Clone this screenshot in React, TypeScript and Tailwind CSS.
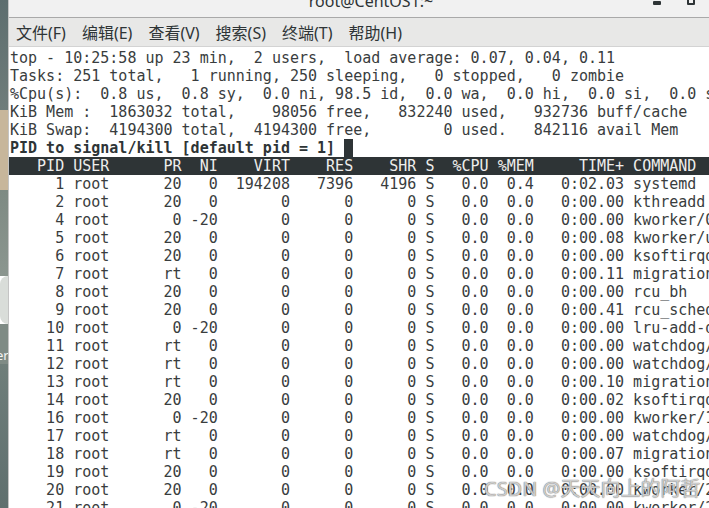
import React from 'react';

const mono = 'font-["DejaVu_Sans_Mono","Liberation_Mono",monospace]';

type Proc = [number, string, string, string, string, string, string, string, string, string, string, string];

const procs: Proc[] = [
  [1, 'root', '20', '0', '194208', '7396', '4196', 'S', '0.0', '0.4', '0:02.03', 'systemd'],
  [2, 'root', '20', '0', '0', '0', '0', 'S', '0.0', '0.0', '0:00.00', 'kthreadd'],
  [4, 'root', '0', '-20', '0', '0', '0', 'S', '0.0', '0.0', '0:00.00', 'kworker/0:0H'],
  [5, 'root', '20', '0', '0', '0', '0', 'S', '0.0', '0.0', '0:00.08', 'kworker/u256:0'],
  [6, 'root', '20', '0', '0', '0', '0', 'S', '0.0', '0.0', '0:00.00', 'ksoftirqd/0'],
  [7, 'root', 'rt', '0', '0', '0', '0', 'S', '0.0', '0.0', '0:00.11', 'migration/0'],
  [8, 'root', '20', '0', '0', '0', '0', 'S', '0.0', '0.0', '0:00.00', 'rcu_bh'],
  [9, 'root', '20', '0', '0', '0', '0', 'S', '0.0', '0.0', '0:00.41', 'rcu_sched'],
  [10, 'root', '0', '-20', '0', '0', '0', 'S', '0.0', '0.0', '0:00.00', 'lru-add-drain'],
  [11, 'root', 'rt', '0', '0', '0', '0', 'S', '0.0', '0.0', '0:00.00', 'watchdog/0'],
  [12, 'root', 'rt', '0', '0', '0', '0', 'S', '0.0', '0.0', '0:00.00', 'watchdog/1'],
  [13, 'root', 'rt', '0', '0', '0', '0', 'S', '0.0', '0.0', '0:00.10', 'migration/1'],
  [14, 'root', '20', '0', '0', '0', '0', 'S', '0.0', '0.0', '0:00.02', 'ksoftirqd/1'],
  [16, 'root', '0', '-20', '0', '0', '0', 'S', '0.0', '0.0', '0:00.00', 'kworker/1:0H'],
  [17, 'root', 'rt', '0', '0', '0', '0', 'S', '0.0', '0.0', '0:00.00', 'watchdog/2'],
  [18, 'root', 'rt', '0', '0', '0', '0', 'S', '0.0', '0.0', '0:00.07', 'migration/2'],
  [19, 'root', '20', '0', '0', '0', '0', 'S', '0.0', '0.0', '0:00.00', 'ksoftirqd/2'],
  [20, 'root', '20', '0', '0', '0', '0', 'S', '0.0', '0.0', '0:00.00', 'kworker/2:0'],
  [21, 'root', '0', '-20', '0', '0', '0', 'S', '0.0', '0.0', '0:00.00', 'kworker/2:0H'],
];

// same column widths top uses here
const fmt = (p: Proc) =>
  String(p[0]).padStart(6) + ' ' +
  p[1].padEnd(8) + ' ' +
  p[2].padStart(3) + ' ' +
  p[3].padStart(3) + ' ' +
  p[4].padStart(7) + ' ' +
  p[5].padStart(6) + ' ' +
  p[6].padStart(6) + ' ' +
  p[7] + ' ' +
  p[8].padStart(5) + ' ' +
  p[9].padStart(4) + ' ' +
  p[10].padStart(9) + ' ' +
  p[11];

const header = '   PID USER      PR  NI    VIRT    RES    SHR S  %CPU %MEM     TIME+ COMMAND';

const menus = ['文件(F)', '编辑(E)', '查看(V)', '搜索(S)', '终端(T)', '帮助(H)'];

const App: React.FC = () => {
  return (
    <div className="relative flex h-[508px] w-[709px] overflow-hidden bg-white">
      {/* desktop behind the window */}
      <div className="flex w-2 shrink-0 flex-col">
        <div className="h-[110px] bg-gradient-to-b from-[#5d6d6e] to-[#6f7d7b]" />
        <div className="h-[80px] bg-[#c7b69b]" />
        <div className="h-[86px] bg-gradient-to-b from-[#7e8a83] to-[#8b968f]" />
        <div className="h-[48px] rounded-l-full bg-[#d9ddd9]" />
        <div className="flex h-[40px] items-end bg-[#7f8b85]">
          <span className="-ml-[4px] pb-[2px] font-['Noto_Sans',sans-serif] text-[13px] leading-none text-[#f4f4f4]">er</span>
        </div>
        <div className="flex-1 bg-gradient-to-b from-[#6f7e7a] to-[#5f6f6e]" />
      </div>

      <div className="flex min-w-0 flex-1 flex-col border-l border-[#c4c4c4]">
        {/* title bar, cut at the top */}
        <div className="flex h-[18px] shrink-0 items-start overflow-hidden border-b border-[#a9a9a9] bg-[#f1f1f1]">
          <div className="flex flex-1 justify-center pl-[80px]">
            <span className="-mt-[10px] font-['Noto_Sans',sans-serif] text-[16px] leading-[22px] text-[#2e3436]">root@CentOS1:~</span>
          </div>
          <div className="flex items-start gap-[26px] pr-[14px]">
            <div className="mt-[1px] h-[4px] w-[8px] rounded-[1px] bg-[#2e3436]" />
            <div className="-mt-[4px] h-[9px] w-[8px] rounded-[1px] border-2 border-[#2e3436]" />
          </div>
        </div>

        {/* menu bar */}
        <div className="flex h-[29px] shrink-0 items-center gap-[16px] border-b border-[#d3d3d3] bg-[#e8e8e7] px-[7px] pt-[2px] font-['Noto_Sans','Noto_Sans_CJK_SC',sans-serif] text-[16px] text-[#2e3436]">
          {menus.map((m) => (
            <span key={m} className="leading-none">{m}</span>
          ))}
        </div>

        {/* terminal */}
        <div className={`flex-1 overflow-hidden pl-[1px] pt-[2px] text-[15px] leading-[18px] text-[#393d3e] ${mono}`}>
          <div className="whitespace-pre">top - 10:25:58 up 23 min,  2 users,  load average: 0.07, 0.04, 0.11</div>
          <div className="whitespace-pre">Tasks: 251 total,   1 running, 250 sleeping,   0 stopped,   0 zombie</div>
          <div className="whitespace-pre">%Cpu(s):  0.8 us,  0.8 sy,  0.0 ni, 98.5 id,  0.0 wa,  0.0 hi,  0.0 si,  0.0 st</div>
          <div className="whitespace-pre">KiB Mem :  1863032 total,    98056 free,   832240 used,   932736 buff/cache</div>
          <div className="whitespace-pre">KiB Swap:  4194300 total,  4194300 free,        0 used.   842116 avail Mem</div>
          <div className="flex whitespace-pre text-[#2e3436]">
            <span className="font-bold">PID to signal/kill [default pid = 1] </span>
            <span className="h-[18px] w-[9px] bg-[#2e3436]" />
          </div>
          <div className="-ml-[1px] whitespace-pre bg-[#2e3436] pl-[1px] text-[#eeeeec]">{header}</div>
          {procs.map((p) => (
            <div key={p[0]} className="whitespace-pre">{fmt(p)}</div>
          ))}
        </div>
      </div>

      {/* watermark */}
      <div className="absolute left-[484px] top-[476px] font-['Noto_Sans','Noto_Sans_CJK_SC',sans-serif] text-[20px] leading-[26px] text-[#ffffffa0] [text-shadow:0_0_1px_#777,0_0_1px_#777]">
        CSDN @天天向上的阿哲
      </div>
    </div>
  );
};

export default App;
